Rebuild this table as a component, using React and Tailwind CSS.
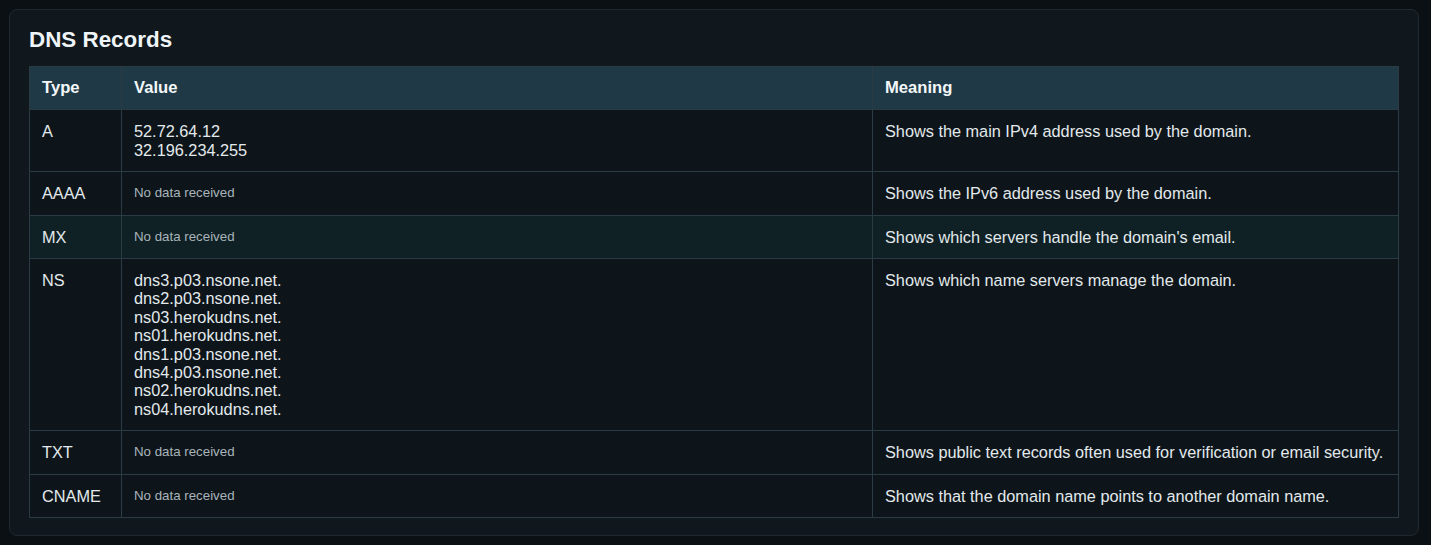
const rows = [
  { type: "A", values: ["52.72.64.12", "32.196.234.255"], meaning: "Shows the main IPv4 address used by the domain." },
  { type: "AAAA", values: [], meaning: "Shows the IPv6 address used by the domain." },
  { type: "MX", values: [], meaning: "Shows which servers handle the domain's email.", active: true },
  {
    type: "NS",
    values: [
      "dns3.p03.nsone.net.",
      "dns2.p03.nsone.net.",
      "ns03.herokudns.net.",
      "ns01.herokudns.net.",
      "dns1.p03.nsone.net.",
      "dns4.p03.nsone.net.",
      "ns02.herokudns.net.",
      "ns04.herokudns.net.",
    ],
    meaning: "Shows which name servers manage the domain.",
  },
  { type: "TXT", values: [], meaning: "Shows public text records often used for verification or email security." },
  { type: "CNAME", values: [], meaning: "Shows that the domain name points to another domain name." },
]

const App = () => {
  return (
    <div className="min-h-screen bg-[#0a1013] pt-[9px] pl-[9px] pr-[12px] pb-[9px] font-['Liberation_Sans',Arial,sans-serif]">
      <div className="rounded-lg border border-[#1f2a30] bg-[#10181d] px-[19px] pt-[16px] pb-[17px]">
        <h2 className="text-[22.4px] font-bold text-[#eef4f7] leading-[28px] mb-[12px]">DNS Records</h2>
        <table className="w-full border-collapse text-[16.3px] leading-[18.4px] text-[#e3e9ec]">
          <thead>
            <tr className="bg-[#1f3a46] text-left">
              <th className="w-[92px] border border-[#2a3b44] px-3 py-3 text-[16.6px] font-bold text-[#f3f7f9]">Type</th>
              <th className="w-[751px] border border-[#2a3b44] px-3 py-3 text-[16.6px] font-bold text-[#f3f7f9]">Value</th>
              <th className="border border-[#2a3b44] px-3 py-3 text-[16.6px] font-bold text-[#f3f7f9]">Meaning</th>
            </tr>
          </thead>
          <tbody>
            {rows.map((r) => (
              <tr key={r.type} className={r.active ? "bg-[#0f2125]" : "bg-[#0d151a]"}>
                <td className="border border-[#2a3b44] px-3 py-3 align-top">{r.type}</td>
                <td className="border border-[#2a3b44] px-3 py-3 align-top">
                  {r.values.length ? (
                    r.values.map((v) => <div key={v}>{v}</div>)
                  ) : (
                    <div className="text-[13.3px] text-[#a9b4ba]">No data received</div>
                  )}
                </td>
                <td className="border border-[#2a3b44] pl-3 pr-2 py-3 align-top whitespace-nowrap">{r.meaning}</td>
              </tr>
            ))}
          </tbody>
        </table>
      </div>
    </div>
  )
}

export default App
